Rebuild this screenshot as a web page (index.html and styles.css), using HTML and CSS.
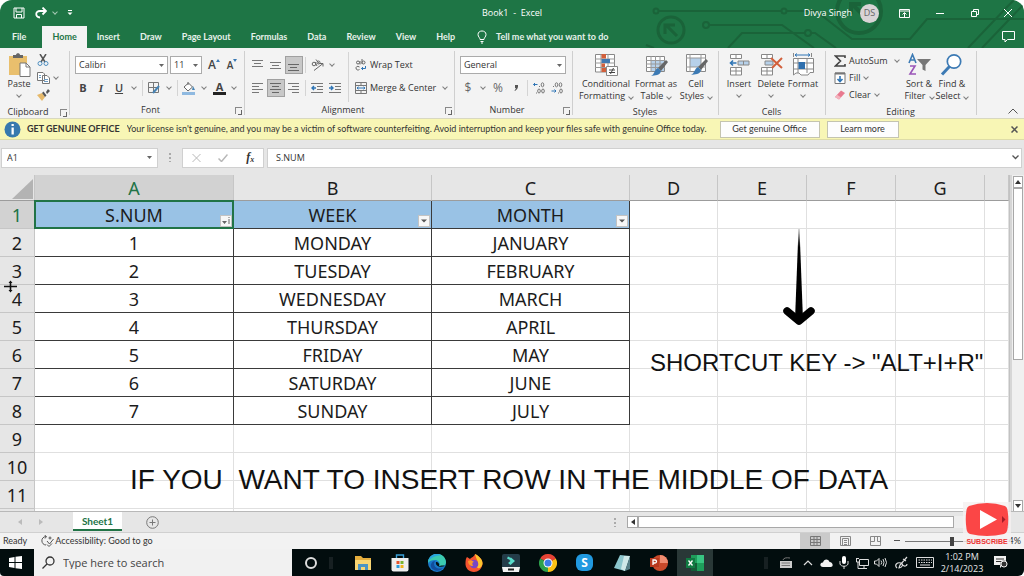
FILE: index.html
```html
<!DOCTYPE html>
<html lang="en">
<head>
<meta charset="utf-8">
<title>Book1 - Excel</title>
<link rel="stylesheet" href="styles.css">
</head>
<body>
<div class="app">
  <header class="top">
    <svg class="circuit" width="440" height="48" viewBox="0 0 440 48" fill="none" stroke="#1a6339" stroke-width="2" aria-hidden="true">
      <circle cx="72" cy="11" r="2.500"/><path d="M75 11H197M203 11H232L268 39H326L343 19H440"/><circle cx="200" cy="11" r="2.500"/>
      <circle cx="87" cy="30" r="13" stroke-width="3"/><path d="M93 36L82 25M81 34V25H91" stroke-width="3"/>
      <circle cx="122" cy="25" r="3"/><path d="M125 25H198L230 48M62 45L70 48M144 48L158 33H221M227 33H231L252 48"/><circle cx="224" cy="33" r="3"/>
      <circle cx="275" cy="11" r="22" stroke-width="4"/><path d="M268 4L282 18M267 14V4H277" stroke-width="4"/>
      <path d="M384 48L424 6L430 0M398 48L440 4" />
    </svg>
    <div class="titlebar">
      <div class="quick">
        <button class="ib" aria-label="Save"><svg width="12" height="12" viewBox="0 0 12 12" fill="none" stroke="#fff"><path d="M1 1H11V11H1ZM3 1V5H9V1M3.500 11V7.500H8.500V11"/></svg></button>
        <button class="ib" aria-label="Redo"><svg width="12" height="12" viewBox="0 0 12 12" fill="none" stroke="#fff" stroke-width="1.800"><path d="M11 4H5C0 4 0 10 5 10.500M7.500 .5L11 4L7.500 7.500"/></svg></button>
        <button class="caret" aria-label="Redo options"></button>
        <button class="ib" aria-label="Customize toolbar"><svg width="6" height="6" viewBox="0 0 6 6" fill="#fff"><path d="M1 0H5V1H1ZM0.500 2.500H5.500L3 5Z"/></svg></button>
      </div>
      <h1 class="title">Book1&nbsp; -&nbsp; Excel</h1>
      <div class="account">
        <span>Divya Singh</span><span class="avatar">DS</span>
        <button class="wb" aria-label="Ribbon display options"><svg width="11" height="9" viewBox="0 0 11 9" fill="none" stroke="#fff"><path d="M.5 .5H10.500V8.500H.5ZM.5 2H10.500M5.500 8V4M3.500 5.500L5.500 3.500L7.500 5.500"/></svg></button>
        <button class="wb" aria-label="Minimize"><svg width="8" height="8" viewBox="0 0 8 8" stroke="#fff"><path d="M0 4.500H8"/></svg></button>
        <button class="wb" aria-label="Restore"><svg width="8" height="8" viewBox="0 0 8 8" fill="none" stroke="#fff"><path d="M.5 2.500H5.500V7.500H.5ZM2.500 2V.5H7.500V5.500H6"/></svg></button>
        <button class="wb" aria-label="Close"><svg width="8" height="8" viewBox="0 0 8 8" stroke="#fff"><path d="M0 0L8 8M8 0L0 8"/></svg></button>
      </div>
    </div>
    <nav class="tabs" aria-label="Ribbon tabs">
      <button class="tab file">File</button><button class="tab active">Home</button><button class="tab">Insert</button><button class="tab">Draw</button><button class="tab">Page Layout</button><button class="tab">Formulas</button><button class="tab">Data</button><button class="tab">Review</button><button class="tab">View</button><button class="tab">Help</button>
      <button class="tab tell"><svg width="10" height="14" viewBox="0 0 10 14" fill="none" stroke="#fff"><path d="M3 9.500C3 7.500 1 7 1 4.500C1 -.2 9 -.2 9 4.500C9 7 7 7.500 7 9.500ZM3.500 11.500H6.500M4 13H6"/></svg>Tell me what you want to do</button>
      <button class="ib comment" aria-label="Comments"><svg width="13" height="12" viewBox="0 0 13 12" fill="none" stroke="#fff"><path d="M.5 .5H12.500V8.500H5.500L3 11V8.500H.5Z"/></svg></button>
    </nav>
  </header>

  <section class="ribbon" aria-label="Home">
    <div class="group g-clip">
      <div class="body row-top">
        <button class="big paste"><svg width="24" height="24" viewBox="0 0 24 24"><path d="M2 3H20V22H2Z" fill="#e9bf6d"/><path d="M6 5V2H9C9 -.5 13 -.5 13 2H16V5Z" fill="#666"/><path d="M13 10H19L23 14V23.500H13Z" fill="#fff" stroke="#777"/><path d="M19 10V14H23" fill="none" stroke="#777"/></svg><span>Paste</span><i class="caret"></i></button>
        <div class="stack">
          <button class="ib s17" aria-label="Cut"><svg width="12" height="13" viewBox="0 0 12 13" fill="none"><path d="M3 0L8 8M9 0L4 8" stroke="#555" stroke-width="1.500"/><circle cx="3" cy="9.500" r="2" stroke="#4f8fc0"/><circle cx="9" cy="9.500" r="2" stroke="#4f8fc0"/></svg></button>
          <span class="pair"><button class="ib s17" aria-label="Copy"><svg width="13" height="12" viewBox="0 0 13 12" fill="#fff" stroke="#777"><path d="M.5 .5H6L7.500 2V8.500H.5ZM5.500 3.500H10L12.500 6V11.500H5.500Z"/><path d="M2 3.500H4M2 5.500H4M7 7.500H11M7 9.500H11" stroke="#6d9cc4"/></svg></button><button class="caret" aria-label="Copy options"></button></span>
          <button class="ib s17" aria-label="Format painter"><svg width="13" height="12" viewBox="0 0 13 12"><path d="M0 6L5 4L8 8L5 12Z" fill="#e6b96a"/><path d="M5 4L8 8L9.500 6.500L6.500 2.500ZM9 3L11 0L13 2L10 5Z" fill="#555"/></svg></button>
        </div>
      </div>
      <div class="foot"><span>Clipboard</span><button class="launch" aria-label="Clipboard settings"></button></div>
    </div>

    <div class="group g-font">
      <div class="body">
        <div class="line">
          <select class="sel font-name" aria-label="Font"><option>Calibri</option></select>
          <select class="sel font-size" aria-label="Font size"><option>11</option></select>
          <button class="tb grow" aria-label="Increase font size">A<svg width="4" height="3" viewBox="0 0 4 3"><path d="M0 3L2 0L4 3Z" fill="#3978b4"/></svg></button>
          <button class="tb grow small" aria-label="Decrease font size">A<svg width="4" height="3" viewBox="0 0 4 3"><path d="M0 0L2 3L4 0Z" fill="#3978b4"/></svg></button>
        </div>
        <div class="line">
          <button class="tb b">B</button><button class="tb i">I</button><button class="tb u">U</button><button class="caret" aria-label="Underline options"></button>
          <i class="sep"></i>
          <button class="tb" aria-label="Borders"><svg width="12" height="12" viewBox="0 0 12 12" fill="none" stroke="#777"><path d="M.5 .5H10.500V10.500H.5ZM5.500 0V11M0 5.500H11"/><path d="M5 11L11 4" stroke="#4784b5" stroke-width="2"/></svg></button><button class="caret" aria-label="Border options"></button>
          <i class="sep"></i>
          <button class="tb" aria-label="Fill color"><svg width="14" height="13" viewBox="0 0 14 13"><path d="M0 10H13V13H0Z" fill="#8fb9e0"/><path d="M2 5L6.500 1L10.500 5L6 9ZM6 3V0" fill="#fff" stroke="#666"/><path d="M11 4L13 8H10Z" fill="#4784b5"/></svg></button><button class="caret" aria-label="Fill options"></button>
          <button class="tb color" aria-label="Font color">A</button><button class="caret" aria-label="Font color options"></button>
        </div>
      </div>
      <div class="foot"><span>Font</span><button class="launch" aria-label="Font settings"></button></div>
    </div>

    <div class="group g-align">
      <div class="body split">
        <div>
          <div class="line">
            <button class="tb" aria-label="Top align"><svg width="12" height="10" viewBox="0 0 12 10" stroke="#777"><path d="M0 .5H11M2 3.500H9M0 6.500H11"/></svg></button><button class="tb" aria-label="Middle align"><svg width="12" height="10" viewBox="0 0 12 10" stroke="#777"><path d="M0 2.500H11M2 5.500H9M0 8.500H11"/></svg></button><button class="tb on" aria-label="Bottom align"><svg width="12" height="14" viewBox="0 0 12 14" stroke="#666"><path d="M0 6.500H11M2 9.500H9M0 12.500H11"/></svg></button>
            <i class="sep"></i>
            <button class="tb" aria-label="Orientation"><svg width="13" height="12" viewBox="0 0 13 12" fill="none" stroke="#666"><circle cx="3" cy="5" r="1.800"/><path d="M4 3L6 7M5 .5L8.500 5"/><circle cx="7.500" cy="3.500" r="1.500"/><path d="M3 11.500L12 4.500M9 4.500H12V7.500"/></svg></button><button class="caret" aria-label="Orientation options"></button>
          </div>
          <div class="line">
            <button class="tb" aria-label="Align left"><svg width="12" height="10" viewBox="0 0 12 10" stroke="#777"><path d="M0 .5H11M0 3.500H7M0 6.500H11M0 9.500H7"/></svg></button><button class="tb on" aria-label="Center"><svg width="12" height="10" viewBox="0 0 12 10" stroke="#666"><path d="M0 .5H11M2 3.500H9M0 6.500H11M2 9.500H9"/></svg></button><button class="tb" aria-label="Align right"><svg width="12" height="10" viewBox="0 0 12 10" stroke="#777"><path d="M0 .5H11M4 3.500H11M0 6.500H11M4 9.500H11"/></svg></button>
            <i class="sep"></i>
            <button class="tb" aria-label="Decrease indent"><svg width="12" height="10" viewBox="0 0 12 10" stroke="#777"><path d="M0 .5H12M6 3.500H12M6 6.500H12M0 9.500H12"/><path d="M5 5H1M3 3L1 5L3 7" stroke="#2f75b5" stroke-width="1.400" fill="none"/></svg></button><button class="tb" aria-label="Increase indent"><svg width="12" height="10" viewBox="0 0 12 10" stroke="#777"><path d="M0 .5H12M6 3.500H12M6 6.500H12M0 9.500H12"/><path d="M0 5H4M2 3L4 5L2 7" stroke="#2f75b5" stroke-width="1.400" fill="none"/></svg></button>
          </div>
        </div>
        <div class="wraps">
          <button class="cmd line"><svg width="12" height="12" viewBox="0 0 12 12" fill="none" stroke="#666"><circle cx="3" cy="3.500" r="1.500"/><path d="M5 2V5.500M7 0V5"/><circle cx="8.500" cy="3.500" r="1.500"/><path d="M4.500 8C2 6.500 1 8 1 9C1 11 3 11.500 4.500 10.500"/><path d="M10.500 7V9.500H6.500M8 8L6.500 9.500L8 11" stroke="#2f75b5"/></svg>Wrap Text</button>
          <button class="cmd line"><svg width="12" height="12" viewBox="0 0 12 12" fill="none" stroke="#777"><path d="M.5 .5H11.500V11.500H.5ZM.5 3.500H11.500M.5 8.500H11.500M6 .5V3.500M6 8.500V11.500"/><path d="M2 6H10M3.500 4.800L2 6L3.500 7.200M8.500 4.800L10 6L8.500 7.200" stroke="#2f75b5"/></svg>Merge &amp; Center<i class="caret"></i></button>
        </div>
      </div>
      <div class="foot"><span>Alignment</span><button class="launch" aria-label="Alignment settings"></button></div>
    </div>

    <div class="group g-num">
      <div class="body">
        <div class="line"><select class="sel num-format" aria-label="Number format"><option>General</option></select></div>
        <div class="line">
          <button class="tb sym">$</button><button class="caret" aria-label="Currency options"></button><button class="tb sym">%</button><button class="tb sym" aria-label="Comma style"><svg width="4" height="6" viewBox="0 0 4 6"><path d="M1 0H4Q4.500 4 1 6L.5 5.500Q2 4 1.800 3H1Z" fill="#555"/></svg></button>
          <i class="sep"></i>
          <button class="tb dec" aria-label="Increase decimal"><svg width="13" height="12" viewBox="0 0 13 12" fill="none" stroke="#777"><path d="M4.500 2.500H.5M2 1L.5 2.500L2 4" stroke="#2f75b5"/><ellipse cx="9.500" cy="2.800" rx="1.300" ry="2"/><ellipse cx="6" cy="9" rx="1.300" ry="2"/><ellipse cx="10" cy="9" rx="1.300" ry="2"/><path d="M6 4.500H7M3 11H4"/></svg></button><button class="tb dec" aria-label="Decrease decimal"><svg width="13" height="12" viewBox="0 0 13 12" fill="none" stroke="#777"><path d="M.5 9H5M3.500 7.500L5 9L3.500 10.500" stroke="#2f75b5"/><ellipse cx="5.500" cy="2.800" rx="1.300" ry="2"/><ellipse cx="9.500" cy="2.800" rx="1.300" ry="2"/><ellipse cx="10" cy="9" rx="1.300" ry="2"/><path d="M2 4.500H3M7 11H8"/></svg></button>
        </div>
      </div>
      <div class="foot"><span>Number</span><button class="launch" aria-label="Number settings"></button></div>
    </div>

    <div class="group g-style">
      <div class="body row-top">
        <button class="big wide"><svg width="24" height="24" viewBox="0 0 24 24"><path d="M1.500 1.500H20.500V19H1.500Z" fill="#fff" stroke="#888"/><path d="M7 1V19M14 1V19M1 6H21M1 10H21M1 14.500H21" stroke="#999"/><path d="M7.500 1H12V5.500H7.500ZM7.500 10.500H11V14H7.500ZM7.500 15H12V19H7.500Z" fill="#d2603c"/><path d="M7.500 6H16V10H7.500Z" fill="#4179b0"/><path d="M12.500 13.500H23.500V22.500H12.500Z" fill="#fff" stroke="#888"/><path d="M15 17H21M15 19.500H21M19.500 15L16.500 21" stroke="#444"/></svg><span>Conditional<br>Formatting<i class="caret in"></i></span></button>
        <button class="big mid"><svg width="24" height="24" viewBox="0 0 24 24"><path d="M2.500 3.500H20.500V18.500H2.500Z" fill="#fff" stroke="#888"/><path d="M7 8H20V18H7Z" fill="#b7d1ea"/><path d="M7 3V19M11.500 3V19M16 3V19M2 7.500H21M2 11H21M2 14.500H21" stroke="#999"/><path d="M22 7L24 9L17 18L14 15Z" fill="#666"/><path d="M14 15L17 18C16 23 11 22 7 23C11 21 10 17 14 15Z" fill="#3c7ab4"/></svg><span>Format as<br>Table<i class="caret in"></i></span></button>
        <button class="big"><svg width="24" height="24" viewBox="0 0 24 24"><path d="M2.500 1.500H21.500V18.500H2.500Z" fill="#fff" stroke="#888"/><path d="M6 5H17V14H6Z" fill="#b7d1ea"/><path d="M6 1V19M17 1V19M2 5H22M2 14H22" stroke="#999"/><path d="M22 6L24 8L17 17L14 14Z" fill="#666"/><path d="M14 14L17 17C16 22 11 21 7 22C11 20 10 16 14 14Z" fill="#3c7ab4"/></svg><span>Cell<br>Styles<i class="caret in"></i></span></button>
      </div>
      <div class="foot"><span>Styles</span></div>
    </div>

    <div class="group g-cells">
      <div class="body row-top">
        <button class="big"><svg width="22" height="24" viewBox="0 0 22 24" fill="#fff" stroke="#888"><path d="M2.500 1.500H13.500V5.500H2.500ZM8 1.500V5.500M2.500 14.500H13.500V22H2.500ZM8 14.500V22M2.500 18H13.500"/><path d="M10 8H21V12H10ZM15.500 8V12" fill="#b7d1ea"/><path d="M8.500 10H2.500M5 7.500L2.500 10L5 12.500" fill="none" stroke="#2f75b5" stroke-width="1.600"/></svg><span>Insert</span><i class="caret"></i></button>
        <button class="big"><svg width="24" height="24" viewBox="0 0 24 24" fill="#fff" stroke="#888"><path d="M2.500 1.500H13.500V5.500H2.500ZM8 1.500V5.500M2.500 14.500H13.500V22H2.500ZM8 14.500V22M2.500 18H13.500"/><path d="M6 8H14V12H6Z" fill="#b7d1ea"/><path d="M12 5L23 15M23 5L13 15" stroke="#d2603c" stroke-width="2"/></svg><span>Delete</span><i class="caret"></i></button>
        <button class="big"><svg width="24" height="24" viewBox="0 0 24 24" fill="#fff" stroke="#888"><path d="M2.500 5.500H22.500V19.500H19L17 22H10L8 20H5L2.500 22Z"/><path d="M7 5V20M16 5V20M2 10H23M2 16H23M2.500 0V4M20.500 0V4" fill="none"/><path d="M7.500 9H14V16H7.500Z" fill="#2f6fad" stroke="none"/><path d="M4 2H19M6 .5L4 2L6 3.500M17 .5L19 2L17 3.500" fill="none" stroke="#2f75b5"/></svg><span>Format</span><i class="caret"></i></button>
      </div>
      <div class="foot"><span>Cells</span></div>
    </div>

    <div class="group g-edit">
      <div class="body row-top">
        <div class="stack edits">
          <button class="cmd s17"><svg width="12" height="12" viewBox="0 0 12 12" fill="none" stroke="#444" stroke-width="1.600"><path d="M11 3V1H1.500L6.500 6L1.500 11H11V9"/></svg>AutoSum<i class="caret"></i></button>
          <button class="cmd s17"><svg width="12" height="12" viewBox="0 0 12 12" fill="#fff" stroke="#777"><path d="M1 1H11V11.500H1Z"/><path d="M1 1.500H11" stroke-width="2"/><path d="M6 4V9M3.500 7L6 9.500L8.500 7" fill="none" stroke="#2f75b5" stroke-width="1.600"/></svg>Fill<i class="caret near"></i></button>
          <button class="cmd s17"><svg width="12" height="12" viewBox="0 0 12 12"><path d="M1 8L7 1.500L11 4L5 10.500Z" fill="#e8798f"/><path d="M1 8L3 5.800L7 8.200L5 10.500Z" fill="#f3b3be"/></svg>Clear<i class="caret near"></i></button>
        </div>
        <button class="big sort"><svg width="24" height="24" viewBox="0 0 24 24" fill="none"><path d="M2 10L5.500 1.500L9 10M3.500 7H8" stroke="#3c7ab4" stroke-width="1.600"/><path d="M3 13H8L3 21H9" stroke="#9a55b8" stroke-width="1.600"/><path d="M10 6H24L18.500 12V18L15.500 16.500V12Z" fill="#777"/></svg><span>Sort &amp;<br>Filter<i class="caret in"></i></span></button>
        <button class="big"><svg width="24" height="24" viewBox="0 0 24 24" fill="none" stroke="#3c7ab4"><circle cx="14" cy="8.500" r="6.700" fill="#fff" stroke-width="1.700"/><path d="M9.500 13.500L2 21.500" stroke-width="3"/></svg><span>Find &amp;<br>Select<i class="caret in"></i></span></button>
      </div>
      <div class="foot"><span>Editing</span></div>
    </div>
    <div class="group g-end"><button class="ib collapse" aria-label="Collapse ribbon"><svg width="10" height="6" viewBox="0 0 10 6" fill="none" stroke="#555"><path d="M.5 5.500L5 1L9.500 5.500"/></svg></button></div>
  </section>

  <section class="notice">
    <svg width="17" height="17" viewBox="0 0 17 17"><circle cx="8.500" cy="8.500" r="8" fill="#3779ae"/><path d="M7.500 3H9.800V5H7.500ZM7.500 6.500H9.800V13.500H7.500Z" fill="#fff"/></svg>
    <strong>GET GENUINE OFFICE</strong>
    <p>Your license isn't genuine, and you may be a victim of software counterfeiting. Avoid interruption and keep your files safe with genuine Office today.</p>
    <button class="nbtn long">Get genuine Office</button><button class="nbtn">Learn more</button>
    <button class="ib nclose" aria-label="Dismiss"><svg width="7" height="7" viewBox="0 0 7 7" stroke="#555" stroke-width="1.500"><path d="M.5 .5L6.500 6.500M6.500 .5L.5 6.500"/></svg></button>
  </section>

  <section class="fbar">
    <select class="sel namebox" aria-label="Name box"><option>A1</option></select>
    <i class="dots"></i>
    <div class="fx">
      <button class="ib" aria-label="Cancel"><svg width="9" height="8" viewBox="0 0 9 8" stroke="#b8b8b8"><path d="M.5 0L8.500 8M8.500 0L.5 8"/></svg></button>
      <button class="ib" aria-label="Enter"><svg width="10" height="8" viewBox="0 0 10 8" fill="none" stroke="#b8b8b8" stroke-width="1.500"><path d="M.5 4.500L3.500 7.500L9.500 .5"/></svg></button>
      <button class="ib fxb" aria-label="Insert function">f<small>x</small></button>
    </div>
    <div class="finput"><input type="text" value="S.NUM" aria-label="Formula"><button class="ib" aria-label="Expand formula bar"><svg width="7" height="5" viewBox="0 0 7 5" fill="none" stroke="#555" stroke-width="1.300"><path d="M.5 .5L3.500 3.500L6.500 .5"/></svg></button></div>
  </section>

  <main class="sheet">
    <div class="grid">
      <table>
        <colgroup><col class="c-row"><col class="c-a"><col class="c-b"><col class="c-b"><col class="c-d"><col class="c-e"><col class="c-e"><col class="c-e"><col></colgroup>
        <thead><tr><th class="corner"><svg width="21" height="20" viewBox="0 0 21 20"><path d="M21 0V20H0Z" fill="#b3b3b3"/></svg></th><th class="cur">A</th><th>B</th><th>C</th><th>D</th><th>E</th><th>F</th><th>G</th><th></th></tr></thead>
        <tbody>
          <tr><th class="cur">1</th><td class="hd picked">S.NUM<button class="filter" aria-label="Sorted, filter"><svg width="9" height="8" viewBox="0 0 9 8" fill="#666"><path d="M0 4H5L2.500 7ZM6.500 0H7.500V1H6.500ZM6.500 2H7.500V7H6.500Z"/></svg></button></td><td class="hd">WEEK<button class="filter" aria-label="Filter week"><svg width="6" height="4" viewBox="0 0 6 4" fill="#555"><path d="M0 .5H6L3 3.500Z"/></svg></button></td><td class="hd">MONTH<button class="filter" aria-label="Filter month"><svg width="6" height="4" viewBox="0 0 6 4" fill="#555"><path d="M0 .5H6L3 3.500Z"/></svg></button></td><td></td><td></td><td></td><td></td><td></td></tr>
          <tr><th>2</th><td class="d">1</td><td class="d">MONDAY</td><td class="d">JANUARY</td><td></td><td></td><td></td><td></td><td></td></tr>
          <tr><th>3</th><td class="d">2</td><td class="d">TUESDAY</td><td class="d">FEBRUARY</td><td></td><td></td><td></td><td></td><td></td></tr>
          <tr><th>4</th><td class="d">3</td><td class="d">WEDNESDAY</td><td class="d">MARCH</td><td></td><td></td><td></td><td></td><td></td></tr>
          <tr><th>5</th><td class="d">4</td><td class="d">THURSDAY</td><td class="d">APRIL</td><td></td><td></td><td></td><td></td><td></td></tr>
          <tr><th>6</th><td class="d">5</td><td class="d">FRIDAY</td><td class="d">MAY</td><td></td><td></td><td></td><td></td><td></td></tr>
          <tr><th>7</th><td class="d">6</td><td class="d">SATURDAY</td><td class="d">JUNE</td><td></td><td></td><td></td><td></td><td></td></tr>
          <tr><th>8</th><td class="d">7</td><td class="d">SUNDAY</td><td class="d">JULY</td><td></td><td></td><td></td><td></td><td></td></tr>
          <tr><th>9</th><td></td><td></td><td></td><td></td><td></td><td></td><td></td><td></td></tr>
          <tr><th>10</th><td></td><td></td><td></td><td></td><td></td><td></td><td></td><td></td></tr>
          <tr><th>11</th><td></td><td></td><td></td><td></td><td></td><td></td><td></td><td></td></tr>
          <tr><th></th><td></td><td></td><td></td><td></td><td></td><td></td><td></td><td></td></tr>
        </tbody>
      </table>
      <svg class="arrow" width="34" height="100" viewBox="0 0 34 100"><defs><linearGradient id="fade" x1="0" y1="0" x2="0" y2="1"><stop offset="0" stop-color="#000" stop-opacity=".3"/><stop offset=".2" stop-color="#000"/></linearGradient></defs><path d="M16.500 1H17.500L21 92H13Z" fill="url(#fade)"/><path d="M5 83L17 93L29 83" fill="none" stroke="#000" stroke-width="7.500" stroke-linecap="round" stroke-linejoin="round"/></svg>
      <p class="note key">SHORTCUT KEY -&gt; "ALT+I+R"</p>
      <p class="note middle">IF YOU  WANT TO INSERT ROW IN THE MIDDLE OF DATA</p>
      <svg class="cursor" width="13" height="13" viewBox="0 0 13 13" stroke="#111" fill="#111"><path d="M0 6.500H13M6.500 2V11" stroke-width="1.600"/><path d="M4.500 3L6.500 .5L8.500 3ZM4.500 10L6.500 12.500L8.500 10Z" stroke="none"/></svg>
    </div>
    <div class="vscroll">
      <button class="sb" aria-label="Scroll up"><svg width="6" height="4" viewBox="0 0 6 4"><path d="M0 4L3 0L6 4Z" fill="#333"/></svg></button>
      <i class="vthumb"></i>
      <button class="sb last" aria-label="Scroll down"><svg width="6" height="4" viewBox="0 0 6 4"><path d="M0 0L3 4L6 0Z" fill="#333"/></svg></button>
    </div>
  </main>

  <div class="sheets">
    <button class="ib nav" aria-label="Previous sheet"><svg width="4" height="6" viewBox="0 0 4 6"><path d="M4 0V6L0 3Z" fill="#bbb"/></svg></button>
    <button class="ib nav" aria-label="Next sheet"><svg width="4" height="6" viewBox="0 0 4 6"><path d="M0 0V6L4 3Z" fill="#bbb"/></svg></button>
    <button class="sheet-tab">Sheet1</button>
    <button class="ib add" aria-label="New sheet"><svg width="13" height="13" viewBox="0 0 13 13" fill="none" stroke="#777"><circle cx="6.500" cy="6.500" r="5.800"/><path d="M3.500 6.500H9.500M6.500 3.500V9.500"/></svg></button>
    <i class="dots"></i>
    <div class="hscroll"><button class="hb" aria-label="Scroll left"><svg width="4" height="6" viewBox="0 0 4 6"><path d="M4 0V6L0 3Z" fill="#333"/></svg></button><i class="hthumb"></i><button class="hb last" aria-label="Scroll right"><svg width="4" height="6" viewBox="0 0 4 6"><path d="M0 0V6L4 3Z" fill="#333"/></svg></button></div>
  </div>

  <footer class="status">
    <span class="ready">Ready</span>
    <svg width="13" height="12" viewBox="0 0 13 12" fill="none" stroke="#555"><path d="M5 1.500C-1 2 0 10 5 10M3.500 0L5.500 1.500L4 3.500M6 6L8.500 9L12.500 4"/><circle cx="9" cy="3" r="1"/><path d="M6 9.500L8 11.500L11 8.500"/></svg>
    <span class="acc">Accessibility: Good to go</span>
    <button class="view on" aria-label="Normal view"><svg width="11" height="10" viewBox="0 0 11 10" fill="none" stroke="#777"><path d="M.5 .5H10.500V9.500H.5ZM4 0V10M7 0V10M0 3.500H11M0 6.500H11"/></svg></button><button class="view" aria-label="Page layout view"><svg width="11" height="10" viewBox="0 0 11 10" fill="none" stroke="#888"><path d="M.5 .5H10.500V9.500H.5ZM2.500 2.500H8.500V9M2.500 2.500V9M4 4.500H7M4 6.500H7M4 8.500H7"/></svg></button><button class="view" aria-label="Page break view"><svg width="11" height="10" viewBox="0 0 11 10" fill="none" stroke="#888"><path d="M.5 .5H10.500V9.500H.5ZM.5 5.500H4.500V.5M7.500 .5V5.500H10"/></svg></button>
    <button class="ib minus" aria-label="Zoom out"><svg width="6" height="6" viewBox="0 0 6 6" stroke="#555"><path d="M0 2.500H6"/></svg></button>
    <input class="zoom" type="range" min="0" max="100" value="50" aria-label="Zoom">
    <span class="pct">4%</span>
  </footer>

  <div class="taskbar">
    <button class="start" aria-label="Start"><svg width="13" height="13" viewBox="0 0 13 13" fill="#fff"><path d="M0 2L5.500 1V6H0ZM6.500 .8L13 0V6H6.500ZM0 7H5.500V12L0 11ZM6.500 7H13V13L6.500 12.200Z"/></svg></button>
    <label class="search"><svg width="13" height="13" viewBox="0 0 13 13" fill="none" stroke="#333" stroke-width="1.300"><circle cx="8" cy="5" r="4"/><path d="M5 8L.5 12.500"/></svg><input type="text" placeholder="Type here to search" aria-label="Search"></label>
    <button class="app-icon" aria-label="Cortana"><svg width="14" height="14" viewBox="0 0 14 14"><circle cx="7" cy="7" r="5" fill="none" stroke="#ddd" stroke-width="2"/></svg></button>
    <i class="tsep"></i>
    <button class="app-icon" aria-label="File Explorer"><svg width="18" height="18" viewBox="0 0 18 18"><path d="M1 2H7L9 4H17V16H1Z" fill="#e5ae3e"/><path d="M1 6H17V16H1Z" fill="#f8d573"/><path d="M4 16V10H14V16H11V13H7V16Z" fill="#4a94c4"/></svg></button>
    <button class="app-icon" aria-label="Store"><svg width="18" height="18" viewBox="0 0 18 18"><path d="M5.500 5V1H12.500V5" fill="none" stroke="#3aa0d8" stroke-width="1.400"/><path d="M0.500 4H17.500V15.500Q17.500 17.500 15.500 17.500H2.500Q.5 17.500 .5 15.500Z" fill="#eee"/><path d="M5.500 7H8.500V10H5.500Z" fill="#e5532c"/><path d="M9.500 7H12.500V10H9.500Z" fill="#7ab530"/><path d="M5.500 11H8.500V14H5.500Z" fill="#2a9bdc"/><path d="M9.500 11H12.500V14H9.500Z" fill="#f0b41c"/></svg></button>
    <button class="app-icon" aria-label="Edge"><svg width="18" height="18" viewBox="0 0 18 18"><circle cx="9" cy="9" r="9" fill="#1878c9"/><path d="M0 8C1 -2 17 -3 18 8C18 12 14 13 11 12C13 9 10 6 7 6C4 6 1 7 0 9Z" fill="#3ccbb0"/><path d="M0 8C1 0 9 -2 13 1C8 2 3 3 0 8Z" fill="#2aa7dd"/><path d="M7 7C4 12 9 16 15 14C10 20 1 15 3 10C4 8 5 7 7 7Z" fill="#124e9d"/><path d="M8 8C7 12 12 14 17 12C15 11 12 12 11 12C12 10 10 8 8 8Z" fill="#031013"/></svg></button>
    <button class="app-icon" aria-label="Firefox"><svg width="18" height="18" viewBox="0 0 18 18"><path d="M2 3L5 5C7 3 9 3 10 0C14 2 18 6 17.500 10C17 15 13 18 9 18C4 18 0 14 .5 9C.6 6 1 4 2 3Z" fill="#f4532f"/><path d="M10 0C14 2 18 6 17.500 10C16 15 13 15 12 13C15 8 11 6 10 0Z" fill="#fdc42d"/><circle cx="9" cy="10" r="4.300" fill="#7747c4"/><path d="M3 7C6 5 8 7 9 8C7 8 7 10 8 12C5 12 3 10 3 7Z" fill="#fb9829"/></svg></button>
    <button class="app-icon" aria-label="Filmora"><svg width="18" height="18" viewBox="0 0 18 18"><rect width="18" height="15" rx="2" fill="#243c49"/><path d="M6 2.500L9 4L8 6L5 4.500ZM9 3.500L13 7L8.500 11L6 9L8.500 7L7.500 6Z" fill="#59dccb"/><path d="M0 13H18L17 18H1Z" fill="#f2f2f2"/><path d="M6 15.500H12" stroke="#222" stroke-width="2"/></svg></button>
    <button class="app-icon" aria-label="Chrome"><svg width="18" height="18" viewBox="0 0 18 18"><path d="M9 9L1.200 4.500A9 9 0 0 1 16.800 4.500Z" fill="#e54335"/><path d="M9 9L16.800 4.500A9 9 0 0 1 9 18Z" fill="#fbc116"/><path d="M9 9L9 18A9 9 0 0 1 1.200 4.500Z" fill="#2da14c"/><path d="M9 4.500H16.800L9 9Z" fill="#e54335"/><circle cx="9" cy="9" r="4.500" fill="#fff"/><circle cx="9" cy="9" r="3.500" fill="#3d7de5"/></svg></button>
    <button class="app-icon skype" aria-label="Skype">S</button>
    <button class="app-icon" aria-label="Notepad"><svg width="18" height="18" viewBox="0 0 18 18"><path d="M7 1L17 2L12 17L1 14Z" fill="#8cc6cd"/><path d="M11 2L17 2L12 17L8 15Z" fill="#cfe8e8"/><path d="M17 2V15L12 17Z" fill="#577f87"/></svg></button>
    <button class="app-icon" aria-label="PowerPoint"><svg width="18" height="18" viewBox="0 0 18 18"><circle cx="10" cy="9" r="8" fill="#c9492a"/><path d="M10 1A8 8 0 0 1 18 9H10Z" fill="#ef8c70"/><rect y="4" width="9" height="9" fill="#b8381d"/><path d="M3 11V6H5C7 6 7 9 5 9H3" fill="none" stroke="#fff" stroke-width="1.300"/></svg></button>
    <button class="app-icon open" aria-label="Excel"><svg width="18" height="18" viewBox="0 0 18 18"><path d="M5 1H18V17H5Z" fill="#1e9e5b"/><path d="M11 1H18V9H11Z" fill="#38c582"/><path d="M5 9H11V17H5Z" fill="#145c38"/><rect y="4" width="9" height="10" fill="#107a42"/><path d="M2.500 6.500L6.500 11.500M6.500 6.500L2.500 11.500" stroke="#fff" stroke-width="1.300"/></svg></button>
    <div class="tray">
      <i class="tsep"></i>
      <button class="ti" aria-label="Input device"><svg width="12" height="12" viewBox="0 0 12 12"><path d="M0 4H12V11H0Z" fill="#ccc"/><path d="M3 3Q4 0 10 1M1.500 6H10M1.500 8.500H10" fill="none" stroke="#777"/></svg></button>
      <button class="ti" aria-label="Hidden icons"><svg width="10" height="10" viewBox="0 0 10 10" fill="none" stroke="#ddd" stroke-width="1.200"><path d="M1 7L5 3L9 7"/></svg></button>
      <button class="ti" aria-label="OneDrive"><svg width="13" height="10" viewBox="0 0 13 10"><path d="M3 9C-1 9 0 4 3 4.500C4 0 9 1 9.500 4C13 4 14 9 10.500 9Z" fill="#f3f3f3"/></svg></button>
      <button class="ti" aria-label="Microphone"><svg width="10" height="13" viewBox="0 0 10 13"><rect x="3" width="4" height="8" rx="2" fill="#fff"/><path d="M1 5V8C2 11 8 11 9 8V5M5 10V13" fill="none" stroke="#ddd"/></svg></button>
      <button class="ti" aria-label="Network"><svg width="13" height="12" viewBox="0 0 13 12" fill="none" stroke="#ddd"><path d="M3.500 2.500H12.500V8.500H3.500ZM8 8.500V11M5 11.500H11M.5 1V5H3M2 5V11.500H5M0 1.500H3"/></svg></button>
      <button class="ti" aria-label="Volume"><svg width="13" height="11" viewBox="0 0 13 11" fill="none" stroke="#ddd"><path d="M.5 4H2.500L5 1.500V9.500L2.500 7H.5ZM7 3.500Q8.500 5.500 7 7.500M9 2Q11 5.500 9 9M11 1Q14 5.500 11 10"/></svg></button>
      <button class="ti pen" aria-label="Pen"><svg width="13" height="13" viewBox="0 0 13 13" fill="none" stroke="#ddd" stroke-width="1.200"><path d="M12 1L5 9L4 12C7 12 9 8 6 7C2 6 -1 9 2 12M8 3L11 5M8 9C9 11 12 10 12 8"/></svg></button>
      <button class="ti kb" aria-label="Touch keyboard"><svg width="18" height="11" viewBox="0 0 18 11" fill="none" stroke="#ddd"><path d="M.5 .5H17.500V10.500H.5Z"/><path d="M2.500 3H16M2.500 5.500H16" stroke-dasharray="1.500 1"/><path d="M4 8H14"/></svg></button>
      <time class="clock"><span>1:02 PM</span><span>2/14/2023</span></time>
      <button class="ti last" aria-label="Notifications"><svg width="14" height="13" viewBox="0 0 14 13"><path d="M0 0H12V9H9L6 12V9H0Z" fill="#f1f1f1"/><path d="M2 3H10M2 5.500H7" stroke="#333"/><circle cx="10" cy="8" r="3.500" fill="#333"/><circle cx="10" cy="8" r="3" fill="none" stroke="#eee"/></svg></button>
    </div>
  </div>

  <a class="subscribe" href="#subscribe"><svg width="44" height="35" viewBox="0 0 44 35"><path d="M4 4Q22 -2 40 4Q42 5 42.500 8Q44 17 42.500 27Q42 31 39 32Q22 36 5 32Q2 31 1.500 27Q0 17 1.500 8Q2 5 4 4Z" fill="#fb4646"/><path d="M37 14L40.500 17.500L37 21Z" fill="#a21d28"/><path d="M15 8L32 17.500L15 27Z" fill="#fff"/></svg>SUBSCRIBE</a>
</div>
</body>
</html>
```

FILE: styles.css
```css
* { box-sizing: border-box; }
body { margin: 0; background: #fff; font: 9px/12px "Open Sans", "Noto Sans", sans-serif; color: #333; }
button, input, select { font: inherit; color: inherit; margin: 0; padding: 0; border: 0; background: none; }
button { display: flex; align-items: center; justify-content: center; white-space: nowrap; }
svg { display: block; flex: none; }
p, h1 { margin: 0; font-size: inherit; font-weight: inherit; }
.app { position: relative; display: flex; flex-direction: column; height: 100vh; min-height: 480px; overflow: hidden; border-radius: 12px 12px 6px 4px; background: #e6e6e6; }

/* title bar and tabs */
.top { position: relative; background: #1e7545; color: #fff; }
.circuit { position: absolute; top: 0; right: 0; width: 440px; }
.titlebar { position: relative; display: grid; grid-template-columns: 1fr auto 1fr; align-items: center; height: 26px; }
.quick { display: flex; align-items: center; gap: 10px; padding-left: 13px; }
.quick .caret { margin: 0 -4px 0 -8px; }
.account { display: flex; align-items: center; justify-content: flex-end; height: 24px; }
.avatar { display: grid; place-items: center; width: 19px; height: 19px; margin: 0 8px 0 8px; border-radius: 50%; background: #d9d4d6; color: #666; }
.wb { width: 35px; height: 24px; }
.wb:last-child { width: 32px; }
.tabs { position: relative; display: flex; align-items: stretch; height: 22px; font-family: Lato, "Open Sans", sans-serif; }
.tab { padding: 0 10px; font-weight: 700; color: #e6f1ea; }
.tab.file { padding: 0 16px 0 12px; }
.tab.active { background: #f3f3f3; color: #1e7545; }
.tab.tell { gap: 9px; padding-left: 12px; }
.comment { margin-left: auto; padding-right: 9px; }

.caret { position: relative; width: 12px; height: 12px; flex: none; display: inline-flex; align-items: center; justify-content: center; font-style: normal; }
.caret::before { content: ""; width: 3px; height: 3px; margin-top: -2px; border: solid currentColor; border-width: 0 1px 1px 0; transform: rotate(45deg); opacity: .6; }

/* ribbon */
.ribbon { display: flex; height: 71px; background: #f3f3f3; border-bottom: 1px solid #d8d8c0; }
.group { position: relative; display: flex; flex-direction: column; flex: none; padding: 4px 0 0 4px; }
.group::after { content: ""; width: 1px; background: #cfcfcf; position: absolute; right: 0; top: 3px; bottom: 3px; }
.g-clip { width: 70px; } .g-font { width: 175px; } .g-align { width: 210px; } .g-num { width: 118px; }
.g-style { width: 146px; } .g-cells { width: 107px; } .g-edit { width: 151px; }
.g-end { flex: 1; padding: 0; } .g-end::after { content: none; }
.body { height: 52px; }
.row-top, .split { display: flex; }
.foot { position: relative; display: flex; justify-content: center; padding-right: 18px; line-height: 16px; }
.g-style .foot, .g-cells .foot, .g-edit .foot { padding-right: 6px; }
.launch { position: absolute; right: 3px; top: 5px; width: 7px; height: 7px; border: solid #888; border-width: 1px 0 0 1px; }
.launch::before { content: ""; width: 4px; height: 4px; margin: 2px 0 0 2px; border: solid #666; border-width: 0 1px 1px 0; }
.line { display: flex; align-items: center; height: 24px; }
.body > .line:first-child, .split .line:first-child { padding-top: 2px; }
.tb { width: 18px; height: 18px; flex: none; font-size: 11px; color: #444; }
.tb.on { background: #c8c8c8; border: 1px solid #a0a0a0; }
.b { font-weight: 700; }
.i { font: italic 700 11px "Liberation Serif", serif; }
.u { text-decoration: underline; font-weight: 600; }
.grow { align-items: flex-start; font-size: 12px; line-height: 18px; font-weight: 600; }
.grow svg { margin-top: 3px; }
.grow.small { font-size: 10px; }
.color { line-height: 11px; font-weight: 700; height: 14px; border-bottom: 3px solid #222; width: 13px; margin: 0 2px 0 3px; }
.sep { width: 1px; height: 16px; margin: 0 2px; background: #d4d4d4; }
.sel { appearance: none; height: 18px; padding: 0 3px; border: 1px solid #ababab; border-radius: 0; background: #fff url("data:image/svg+xml,%3Csvg xmlns='http://www.w3.org/2000/svg' width='5' height='3'%3E%3Cpath d='M0 0H5L2.500 3Z' fill='%23666'/%3E%3C/svg%3E") no-repeat right 3px center; }
.font-name { width: 93px; margin: 0 2px 0 1px; }
.font-size { width: 32px; margin-right: 3px; }
.num-format { width: 106px; margin-left: 1px; }
.sym { font-size: 12px; color: #666; }
.big { flex-direction: column; justify-content: flex-start; width: 32px; height: 52px; padding-top: 1px; gap: 1px; text-align: center; flex: none; }
.big .caret { height: 10px; }
.big .in { width: 4px; height: 8px; margin-left: 4px; }
.paste { width: 30px; }
.wide { width: 58px; } .mid { width: 42px; }
.g-style .big:last-child { width: 38px; }
.s17 { height: 17px; }
.stack { display: flex; flex-direction: column; align-items: flex-start; padding-left: 3px; }
.pair { display: flex; align-items: center; }
.wraps { padding-left: 6px; border-left: 1px solid #d4d4d4; margin-left: 4px; }
.cmd { gap: 3px; justify-content: flex-start; }
.near { margin-left: -3px; }
.edits { width: 72px; padding-left: 4px; }
.sort { width: 34px; }
.collapse { margin: auto 6px 4px auto; }

/* license notice */
.notice { display: flex; align-items: center; height: 21px; padding: 0 6px 0 4px; background: #f8f6b5; border-bottom: 1px solid #dedca8; font-family: Lato, "Open Sans", sans-serif; }
.notice strong { margin: 0 7px 0 6px; font-weight: 700; white-space: nowrap; }
.notice p { white-space: nowrap; overflow: hidden; }
.nbtn { height: 17px; width: 72px; margin-left: 7px; flex: none; border: 1px solid #c4c4b0; background: #fdfdfd; }
.nbtn.long { width: 100px; margin-left: 13px; }
.nclose { margin-left: auto; }

/* formula bar */
.fbar { display: flex; align-items: center; height: 35px; padding: 0 2px 0 1px; }
.namebox { width: 157px; height: 20px; padding: 0 5px; border-color: #d0d0d0; background-position: right 5px center; }
.dots { width: 2px; height: 9px; margin: 0 11px; background: repeating-linear-gradient(#aaa 0 2px, transparent 2px 4px); }
.fx { display: flex; align-items: center; justify-content: space-around; width: 82px; height: 20px; margin-right: 3px; background: #fff; border: 1px solid #d0d0d0; }
.fxb { font: italic 700 12px "Liberation Serif", serif; }
.fxb small { font-size: 8px; margin-top: 3px; }
.finput { display: flex; flex: 1; height: 20px; padding: 0 2px 0 8px; background: #fff; border: 1px solid #d0d0d0; }
.finput input { flex: 1; min-width: 0; }

/* worksheet */
.sheet { display: flex; flex: 1; min-height: 0; }
.grid { position: relative; flex: 1; overflow: hidden; background: #fff; }
table { width: 100%; table-layout: fixed; border-collapse: separate; border-spacing: 0; font: 18px/25px "Noto Sans", sans-serif; color: #1c1c1c; }
.c-row { width: 35px; } .c-a { width: 199px; } .c-b { width: 198px; } .c-d { width: 88px; } .c-e { width: 89px; }
th { height: 28px; padding: 2px 0 0; font-weight: 400; background: #e6e6e6; border: solid #c6c6c6; border-width: 0 1px 1px 0; }
thead th { height: 26px; line-height: 23px; border-bottom-color: #9c9c9c; }
.corner svg { margin: 1px 0 0 12px; }
.cur { background: #d2d2d2; color: #217346; }
td { position: relative; height: 28px; padding: 2px 0 0; text-align: center; border: solid #e0e0e0; border-width: 0 1px 1px 0; }
.d, .hd { border-color: #3a3a3a; }
.hd { background: #99c2e5; }
.picked::after { content: ""; position: absolute; inset: -1px; border: 2px solid #217346; }
.filter { position: absolute; right: 1px; bottom: 1px; width: 12px; height: 12px; background: #f7f7f7; border: 1px solid #c3c3c3; }
.note { position: absolute; font-family: "Liberation Sans", Arial, sans-serif; color: #111; white-space: pre; }
.key { left: 650px; top: 174px; font-size: 24px; line-height: 28px; }
.middle { left: 130px; top: 289px; font-size: 28px; line-height: 32px; }
.arrow { position: absolute; left: 782px; top: 53px; }
.cursor { position: absolute; left: 4px; top: 105px; }
.vscroll { display: flex; flex-direction: column; width: 15px; padding: 1px 1px 0 3px; border-left: 1px solid #c2c2c2; background: linear-gradient(90deg, #d6d6d6 2px, #f0f0f0 2px); }
.sb { height: 12px; background: #fff; border: 1px solid #a8a8a8; }
.sb.last { margin-top: auto; margin-bottom: -1px; }
.vthumb { height: 172px; background: #fff; border: 1px solid #a8a8a8; }

/* sheet tabs */
.sheets { display: flex; align-items: center; height: 21px; padding: 0 15px 0 18px; border-top: 1px solid #b8b8b8; }
.nav { width: 4px; margin-right: 17px; }
.sheet-tab { align-self: flex-start; width: 49px; height: 19px; margin: 0 24px 0 13px; background: #fff; border-bottom: 2px solid #217346; color: #217346; font: 700 10px/12px Lato, "Open Sans", sans-serif; }
.sheets .dots { margin-left: auto; }
.hscroll { display: flex; width: 382px; height: 12px; background: #eee; }
.hb { width: 11px; border: 1px solid #a8a8a8; background: #fff; }
.hb.last { margin-left: auto; }
.hthumb { width: 316px; border: 1px solid #a8a8a8; background: #fff; }

/* status bar */
.status { display: flex; align-items: center; height: 17px; padding: 0 3px 0 3px; background: #f2f2f2; border-top: 1px solid #d0d0d0; font-family: Lato, "Open Sans", sans-serif; }
.ready { margin-right: 14px; }
.acc { margin: 0 auto 0 1px; }
.view { width: 30px; height: 16px; }
.view.on { background: #cacaca; }
.minus { margin-left: 4px; }
.zoom { appearance: none; width: 94px; height: 12px; margin: 0 4px 0 5px; background: linear-gradient(#777, #777) no-repeat center / 100% 1px; }
.zoom::-webkit-slider-thumb { appearance: none; width: 4px; height: 9px; background: #444; }
.pct { width: 18px; text-align: right; }

/* taskbar */
.taskbar { display: flex; align-items: stretch; height: 27px; background: #020d0e; color: #e8e8e8; }
.start { width: 34px; padding-right: 4px; }
.search { display: flex; align-items: center; gap: 8px; width: 258px; padding-left: 8px; background: #f1f1f1; font-size: 11px; }
.search input { flex: 1; min-width: 0; }
.search input::placeholder { color: #444; opacity: 1; }
.app-icon { width: 37px; }
.tsep { width: 4px; height: 12px; align-self: center; background: #172022; }
.tsep + .app-icon { margin-left: 11px; }
.skype { align-self: center; width: 17px; height: 17px; margin: 0 10px; border-radius: 6px; background: #2199e0; color: #fff; font-weight: 700; font-size: 12px; }
.app-icon.open { width: 36px; background: #293837; }
.tray { display: flex; align-items: stretch; margin-left: auto; }
.tray .tsep { margin-right: 7px; }
.ti { width: 18px; }
.tray .tsep + .ti { width: 22px; margin-right: 2px; }
.ti.pen { width: 24px; }
.ti.kb { width: 24px; }
.clock { display: flex; flex-direction: column; justify-content: center; align-items: center; width: 50px; }
.ti.last { width: 37px; padding-right: 10px; }

/* channel badge */
.subscribe { position: absolute; right: 13px; bottom: 27px; display: flex; flex-direction: column; align-items: center; width: 48px; height: 47px; background: rgba(245, 240, 240, .8); color: #e33; font: 700 7px/9px "Liberation Sans", Arial, sans-serif; text-decoration: none; }
```
